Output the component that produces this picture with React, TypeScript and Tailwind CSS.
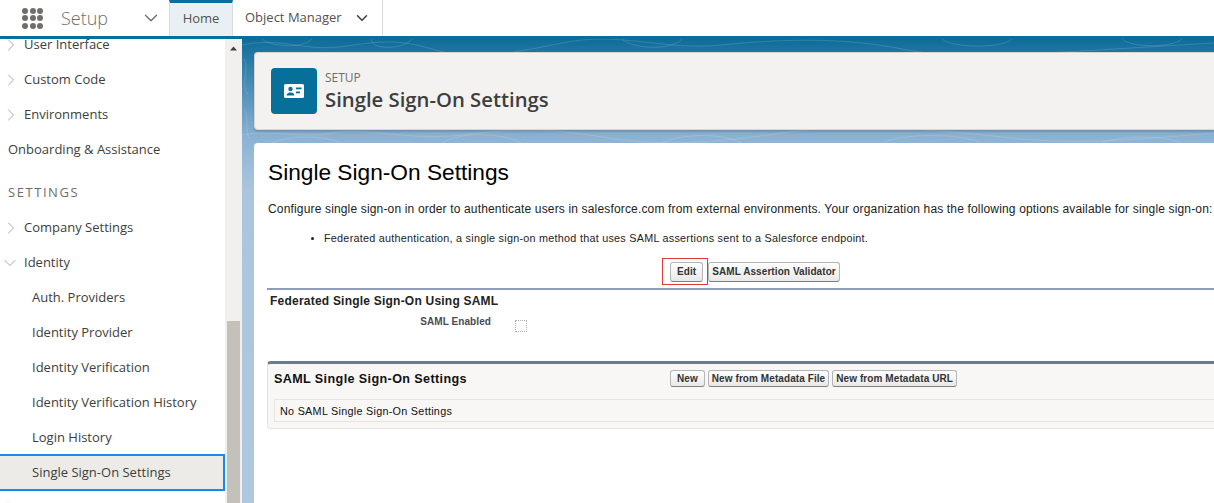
import { ChevronDown, ChevronRight } from "lucide-react";

const sans = "font-['Open_Sans','Noto_Sans',sans-serif]";
const arial = "font-['Liberation_Sans',Arial,sans-serif]";

function NavRow({ label, indent = "none", open = false, selected = false }: { label: string; indent?: "none" | "arrow" | "child"; open?: boolean; selected?: boolean }) {
  const pad = indent === "none" ? "pl-2" : indent === "arrow" ? "pl-6" : "pl-8";
  return (
    <div
      className={`relative flex items-center text-[13px] text-[#3e3e3c] ${pad} ${
        selected ? "h-[37px] -my-px bg-[#ecebe7] border-y-2 border-r-2 border-[#1589ee]" : "h-[35px]"
      }`}
    >
      {indent === "arrow" &&
        (open ? (
          <ChevronDown className="absolute top-[8px] left-0 text-[#a0a0a0]" size={20} strokeWidth={1.1} />
        ) : (
          <ChevronRight className="absolute top-[8px] left-[1px] text-[#a0a0a0]" size={20} strokeWidth={1.1} />
        ))}
      {label}
    </div>
  );
}

function Sidebar() {
  return (
    <div className={`w-[225px] shrink-0 overflow-hidden bg-white ${sans}`}>
      <div className="-mt-[12px]">
        <NavRow label="User Interface" indent="arrow" />
        <NavRow label="Custom Code" indent="arrow" />
        <NavRow label="Environments" indent="arrow" />
        <NavRow label="Onboarding & Assistance" />
        <div className="flex h-[43px] items-center pt-[8px] pl-2 text-[13px] tracking-[0.12em] text-[#706e6b]">SETTINGS</div>
        <NavRow label="Company Settings" indent="arrow" />
        <NavRow label="Identity" indent="arrow" open />
        <NavRow label="Auth. Providers" indent="child" />
        <NavRow label="Identity Provider" indent="child" />
        <NavRow label="Identity Verification" indent="child" />
        <NavRow label="Identity Verification History" indent="child" />
        <NavRow label="Login History" indent="child" />
        <NavRow label="Single Sign-On Settings" indent="child" selected />
        <NavRow label="Integrations" indent="arrow" />
      </div>
    </div>
  );
}

function Scrollbar() {
  return (
    <div className="flex w-[17px] shrink-0 flex-col bg-[#f1f0ee]">
      <svg width="17" height="17" viewBox="0 0 17 17">
        <path d="M5 11.5 L8.5 7.5 L12 11.5 Z" fill="#3e3e3c" />
      </svg>
      <div className="mt-[265px] ml-[2px] w-[13px] flex-1 bg-[#c4c1bb]" />
    </div>
  );
}

function Topo() {
  return (
    <svg className="absolute inset-0 h-full w-full" viewBox="0 0 972 464" preserveAspectRatio="none" fill="none" stroke="#ffffff" strokeOpacity="0.14" strokeWidth="1">
      <path d="M0 6 C40 -2 60 12 96 8 S150 -2 190 10 S260 16 320 4 S420 12 480 6 S600 -2 660 10 S800 14 972 4" />
      <path d="M20 0 C30 8 60 10 70 0 M130 0 C126 10 160 12 170 0 M380 0 C390 10 430 12 440 0 M700 0 C710 9 760 10 770 0 M880 0 C890 9 930 9 940 0" />
      <path d="M0 96 C30 90 60 100 90 94 S170 102 220 96 S300 88 360 98 S470 104 540 94 S690 90 760 98 S880 102 972 94" />
      <path d="M30 104 C50 96 80 96 100 104 M200 104 C220 92 260 94 280 104 M420 104 C440 94 480 94 500 104 M640 104 C660 94 720 94 740 104 M860 104 C880 96 920 96 940 104" />
      <path d="M2 20 C8 30 -2 44 6 56 M2 70 C8 80 2 92 8 100" />
    </svg>
  );
}

function ClassicButton({ children, wide = false, short = false }: { children: string; wide?: boolean; short?: boolean }) {
  return (
    <button
      className={`rounded-[3px] border border-[#b5b5b5] border-b-[#7f7f7f] bg-gradient-to-b from-white to-[#e8e8e8] text-[10px] leading-none font-bold tracking-[0.08px] text-[#333] ${
        wide ? "px-[6px]" : "px-[3px]"
      } ${short ? "h-[17px]" : "h-[20px]"}`}
    >
      {children}
    </button>
  );
}

function PageHeader() {
  return (
    <div className="relative flex h-[78px] items-center rounded-l-[4px] border border-r-0 border-[#d8d6d2] bg-[#f3f2f1] pl-[16px] shadow-[0_2px_2px_rgba(0,0,0,0.15)]">
      <div className="flex h-[46px] w-[46px] items-center justify-center rounded-[4px] bg-[#06709a]">
        <svg width="20" height="14" viewBox="0 0 20 14">
          <rect width="20" height="14" rx="1.5" fill="#fff" />
          <circle cx="6.5" cy="5" r="2.2" fill="#06709a" />
          <path d="M2.5 11.5 C3 9 5 8.5 6.5 8.5 S10 9 10.5 11.5 Z" fill="#06709a" />
          <rect x="12" y="3.5" width="5.5" height="1.8" fill="#06709a" />
          <rect x="12" y="7.5" width="4" height="1.8" fill="#06709a" />
        </svg>
      </div>
      <div className={`ml-[8px] ${sans}`}>
        <div className="text-[12px] leading-[16px] text-[#706e6b]">SETUP</div>
        <div className="text-[20.3px] leading-[26px] font-semibold text-[#3e3e3c]">Single Sign-On Settings</div>
      </div>
    </div>
  );
}

function SsoBody() {
  return (
    <div className={`mt-[13px] h-[400px] rounded-tl-[4px] bg-white pt-[16px] pl-[14px] text-black ${arial}`}>
      <h1 className="text-[22.7px] leading-[26px] font-normal text-[#000]">Single Sign-On Settings</h1>
      <p className="mt-[16px] text-[12px] leading-[16px] tracking-[0.16px] whitespace-nowrap text-[#222]">
        Configure single sign-on in order to authenticate users in salesforce.com from external environments. Your organization has the following options available for single sign-on:
      </p>
      <div className="mt-[14px] flex items-center pl-[43px] text-[10.8px] leading-[14px] tracking-[0.256px] whitespace-nowrap text-[#222]">
        <span className="mr-[10px] h-[3px] w-[3px] rounded-full bg-[#222]" />
        Federated authentication, a single sign-on method that uses SAML assertions sent to a Salesforce endpoint.
      </div>

      <div className="relative mt-[17px] flex h-[20px] items-center gap-[5px] pl-[402px]">
        <div className="pointer-events-none absolute top-[-4px] left-[394px] h-[27px] w-[46px] border border-[#e03a3a]" />
        <ClassicButton wide>Edit</ClassicButton>
        <ClassicButton>SAML Assertion Validator</ClassicButton>
      </div>

      <div className="mt-[6px] -ml-px border-t-2 border-[#8e9dbc] pt-[4px] pl-[3px] text-[12px] leading-[14px] font-bold tracking-[0.22px] text-[#222]">
        Federated Single Sign-On Using SAML
      </div>
      <div className="mt-[7px] flex h-[16px] items-start">
        <div className="w-[223px] text-right text-[10px] leading-[14px] font-bold tracking-[0.08px] text-[#4a4a56]">SAML Enabled</div>
        <div className="mt-[5px] ml-[24px] h-[12px] w-[12px] border border-dotted border-[#b0b0b0]" />
      </div>

      <div className="mt-[30px] -ml-px h-[68px] w-[1100px] rounded-[4px] border border-t-[3px] border-[#e4e3e1] border-t-[#6c7a8d] bg-[#f8f7f6] px-[6px]">
        <div className="relative flex h-[31px] items-center text-[12.6px] font-bold tracking-[0.03em] text-[#111]">
          SAML Single Sign-On Settings
          <div className="absolute top-[6px] left-[396px] flex gap-[3px]">
            <ClassicButton wide short>New</ClassicButton>
            <ClassicButton short>New from Metadata File</ClassicButton>
            <ClassicButton short>New from Metadata URL</ClassicButton>
          </div>
        </div>
        <div className="mt-[4px] flex h-[23px] items-center border border-[#e6e5e3] pt-[1px] pl-[5px] text-[10.8px] tracking-[0.28px] text-[#111]">
          No SAML Single Sign-On Settings
        </div>
      </div>
    </div>
  );
}

export default function App() {
  return (
    <div className="flex h-[503px] w-[1214px] flex-col overflow-hidden bg-white">
      <header className={`flex h-[39px] shrink-0 border-b-[3px] border-[#06709a] bg-white ${sans}`}>
        <div className="flex w-[169px] items-center pl-[22px]">
          <div className="grid grid-cols-3 gap-[1.5px]">
            {Array.from({ length: 9 }).map((_, i) => (
              <span key={i} className="h-[6px] w-[6px] rounded-full bg-[#706e6b]" />
            ))}
          </div>
          <span className="ml-[18px] text-[18px] font-light text-[#706e6b]">Setup</span>
          <ChevronDown className="ml-[32px] text-[#706e6b]" size={22} strokeWidth={1.5} />
        </div>
        <div className="flex w-[64px] items-center justify-center border-x border-t-[3px] border-x-[#dddbda] border-t-[#06709a] bg-[#e8f0f3] pb-[2px] text-[13px] text-[#54514f]">Home</div>
        <div className="flex w-[150px] items-center border-r border-[#dddbda] pl-[12px] text-[13px] text-[#54514f]">
          Object Manager
          <ChevronDown className="ml-[11px] text-[#3e3e3c]" size={18} strokeWidth={2} />
        </div>
      </header>
      <div className="flex min-h-0 flex-1">
        <Sidebar />
        <Scrollbar />
        <main className="relative min-w-0 flex-1 overflow-hidden bg-[linear-gradient(#0f6c9a_0px,#8db3d4_100px,#aac5dd_150px,#aec8e0_464px)]">
          <Topo />
          <div className="relative pt-[13px] pl-[12px]">
            <PageHeader />
            <SsoBody />
          </div>
        </main>
      </div>
    </div>
  );
}
